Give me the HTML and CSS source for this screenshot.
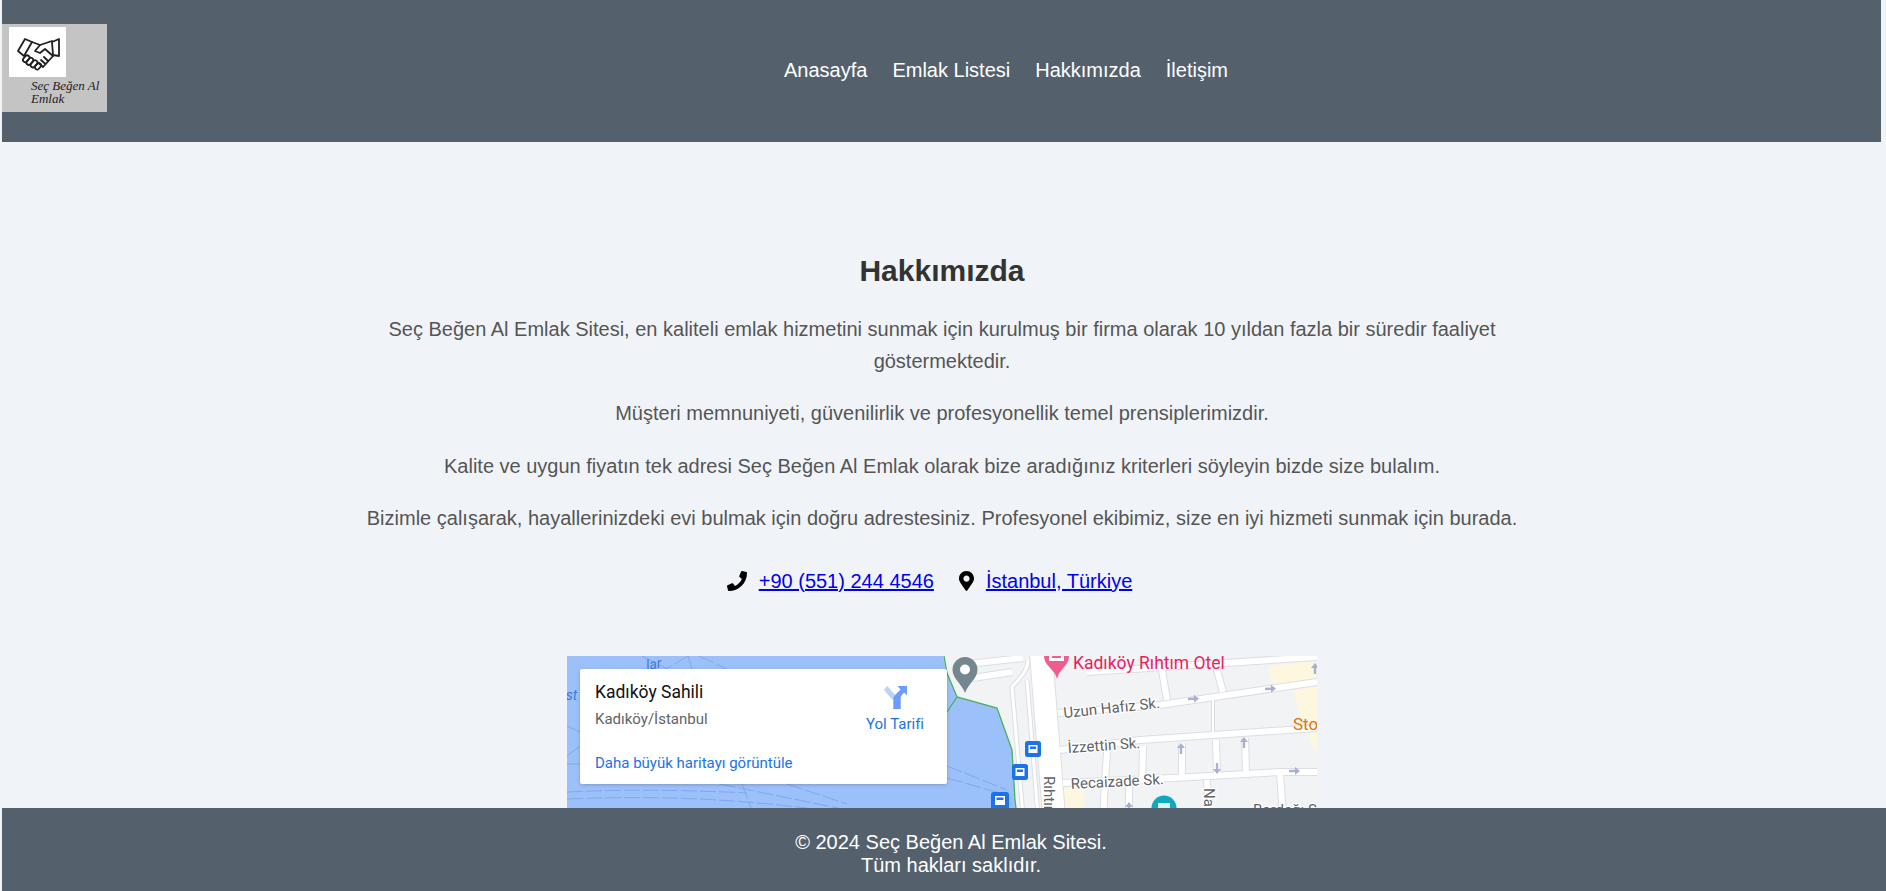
FILE: index.html
```html
<!DOCTYPE html>
<html lang="tr">
<head>
<meta charset="utf-8">
<title>Hakkımızda</title>
<link rel="stylesheet" href="styles.css">
</head>
<body>
<header class="site-header">
  <div class="logo">
    <div class="logo-mark">
      <svg viewBox="0 0 57 50" width="57" height="50" fill="none" stroke="#1f1f1f" stroke-width="1.800" stroke-linejoin="round" stroke-linecap="round">
        <path d="M16 12 L23 15 L15 29 L9 24 Z"/>
        <path d="M50 12 L50 29 L44 28 L43 15 Z"/>
        <path d="M23 15 L31 18 L43 14"/>
        <path d="M31 18 L26 24 L31 26 L36 22 L44 29"/>
        <path d="M44 29 L34 40"/>
        <path d="M39 34 L35 30 M36.500 37 L32 33 M33.500 39.500 L29.500 36"/>
        <g stroke-width="1.800">
          <rect x="13.500" y="29.500" width="7.500" height="4.600" rx="2.300" transform="rotate(-48 17.200 31.800)"/>
          <rect x="16.800" y="32" width="8" height="4.600" rx="2.300" transform="rotate(-48 20.800 34.300)"/>
          <rect x="21" y="34.500" width="8" height="4.600" rx="2.300" transform="rotate(-48 25 36.800)"/>
          <rect x="25.500" y="37" width="7" height="4.600" rx="2.300" transform="rotate(-48 29 39.300)"/>
        </g>
      </svg>
    </div>
    <div class="logo-text">Seç Beğen Al<br>Emlak</div>
  </div>
  <nav class="nav">
    <a href="#">Anasayfa</a>
    <a href="#">Emlak Listesi</a>
    <a href="#">Hakkımızda</a>
    <a href="#">İletişim</a>
  </nav>
</header>

<main class="about">
  <h1>Hakkımızda</h1>
  <p>Seç Beğen Al Emlak Sitesi, en kaliteli emlak hizmetini sunmak için kurulmuş bir firma olarak 10 yıldan fazla bir süredir faaliyet göstermektedir.</p>
  <p>Müşteri memnuniyeti, güvenilirlik ve profesyonellik temel prensiplerimizdir.</p>
  <p>Kalite ve uygun fiyatın tek adresi Seç Beğen Al Emlak olarak bize aradığınız kriterleri söyleyin bizde size bulalım.</p>
  <p>Bizimle çalışarak, hayallerinizdeki evi bulmak için doğru adrestesiniz. Profesyonel ekibimiz, size en iyi hizmeti sunmak için burada.</p>

  <div class="contact">
    <span class="contact-item">
      <svg class="ci" viewBox="0 0 512 512" width="20" height="20"><path d="M493.400 24.600l-104-24c-11.300-2.600-22.900 3.300-27.500 13.900l-48 112c-4.200 9.800-1.400 21.300 6.900 28l60.600 49.600c-36 76.700-98.900 140.500-177.200 177.200l-49.600-60.600c-6.800-8.300-18.200-11.100-28-6.900l-112 48C3.900 366.500-2 378.100.6 389.400l24 104C27.100 504.200 36.700 512 48 512c256.100 0 464-207.500 464-464 0-11.200-7.700-20.900-18.600-23.400z"/></svg>
      <a href="#">+90 (551) 244 4546</a>
    </span>
    <span class="contact-item">
      <svg class="ci" viewBox="0 0 384 512" width="15" height="20"><path d="M172.300 501.700C27 291 0 256 0 192 0 86 86 0 192 0s192 86 192 192c0 64-27 99-172.300 309.700-9.500 13.700-29.900 13.700-39.400 0zM192 272c44.200 0 80-35.800 80-80s-35.800-80-80-80-80 35.800-80 80 35.800 80 80 80z"/></svg>
      <a href="#">İstanbul, Türkiye</a>
    </span>
  </div>

  <div class="map">
    <svg class="map-svg" viewBox="0 0 750 160" width="750" height="160">
      <defs>
        <path id="streets" d="M400 8 L456 2 M406 22 L445 16 M520 16 L750 1 M491 57 L593 49 L750 26 M493 94 L573 84 L646 79 L750 72 M496 127 L606 122 L713 116 L750 116 M595 14 L600 44 M648 7 L656 36 M540 96 L536 160 M576 90 L575 127 M615 87 L615 120 M649 84 L650 118 M678 82 L679 116 M713 117 L716 160 M562 127 L562 160 M640 124 L642 160"/>
        <path id="ramps" d="M461 4 C461 12 458 17 445 31 L456 160 M460 24 L471 160"/>
        <path id="thin" d="M646 42 L646 77"/>
        <path id="arr" d="M0 -1.200 H6 V-4 L11 0 L6 4 V1.200 H0Z"/>
      </defs>
      <rect width="750" height="160" fill="#f2f3f5"/>
      <path class="tint" d="M701 11 L745 4 L750 24 L706 29Z"/>
      <path class="tint" d="M726 34 L750 31 V97 L738 76Z"/>
      <path class="tint" d="M497 132 H518 L516 160 H497Z"/>
      <path class="tint" d="M466 142 L476 140 L478 160 H466Z"/>
      <use href="#streets" class="casing"/>
      <use href="#ramps" class="casing-thin"/>
      <use href="#thin" class="casing-hair"/>
      <path class="casing-major" d="M474 -2 L487 160"/>
      <use href="#streets" class="street"/>
      <use href="#ramps" class="street-thin"/>
      <use href="#thin" class="street-hair"/>
      <path class="street-major" d="M474 -2 L487 160"/>
      <path class="water" d="M0 0 H376 L380 17 L390 41 L430 52 L445 94 L448 144 L450 160 H0Z"/>
      <path class="wave" d="M121 0 L99 13 M121 0 L125 13 M132 0 L160 13 M75 0 L100 13 M153 128 L310 160 M175 128 L187 160 M220 128 L280 148 M0 136 C60 133 120 134 180 137 M0 143 C100 139 170 144 240 152 M380 110 L440 134 M380 122 L440 139 M0 70 L13 76 M0 108 H13 M0 100 L13 90"/>
      <path class="shore" d="M377 0 L380 17 L390 41 L430 52 L445 94 L448 144 L450 160 M390 41 L380 56"/>
      <text class="lbl-water" x="80" y="14" transform="rotate(-10 80 14)">lar</text>
      <text class="lbl-water" x="-9" y="44">ost</text>
      <g class="arrow" fill="#a9b1cc">
        <use href="#arr" transform="translate(621 43) rotate(-3)"/>
        <use href="#arr" transform="translate(698 33) rotate(-3)"/>
        <use href="#arr" transform="translate(614 98) rotate(-90)"/>
        <use href="#arr" transform="translate(677 92) rotate(-90)"/>
        <use href="#arr" transform="translate(650 107) rotate(90)"/>
        <use href="#arr" transform="translate(722 115)"/>
        <use href="#arr" transform="translate(562 157) rotate(-90)"/>
        <use href="#arr" transform="translate(748 18) rotate(-90)"/>
      </g>
      <text class="lbl-pink" x="506" y="13">Kadıköy Rıhtım Otel</text>
      <text class="lbl-st" x="497" y="62" transform="rotate(-6 497 62)">Uzun Hafız Sk.</text>
      <text class="lbl-st" x="501" y="97" transform="rotate(-4 501 97)">İzzettin Sk.</text>
      <text class="lbl-st" x="504" y="133" transform="rotate(-3 504 133)">Recaizade Sk.</text>
      <text class="lbl-st" x="637" y="132" transform="rotate(90 637 132)">Nail</text>
      <text class="lbl-st" x="477" y="120" transform="rotate(90 477 120)">Rıhtım</text>
      <text class="lbl-st" x="686" y="159">Bardağı S</text>
      <text class="lbl-orange" x="726" y="74">Sto</text>
      <path d="M398 1 C391 1 385.500 7 385.500 13.500 C385.500 23 394.500 27 398 37 C401.500 27 410.500 23 410.500 13.500 C410.500 7 405 1 398 1Z" fill="#74868f"/>
      <circle cx="398" cy="13.500" r="5" fill="#fff"/>
      <path d="M477 0 H502 C502 10 492 13 490 23 C488 13 477 10 477 0Z" fill="#ee5d8b"/>
      <rect x="482" y="0" width="15" height="5" fill="#fff"/>
      <rect x="485" y="0" width="9" height="2" fill="#ee5d8b"/>
      <g class="bus">
        <rect x="458" y="85" width="16" height="16" rx="2.500"/>
        <rect x="445" y="108" width="16" height="16" rx="2.500"/>
        <rect x="424" y="136" width="18" height="18" rx="2.500"/>
        <circle cx="597" cy="152" r="12.500" class="teal"/>
      </g>
      <g class="bus-in">
        <path d="M461.500 89 H470.500 V97 H461.500Z M463 90.500 V93 H469 V90.500Z"/>
        <path d="M448.500 112 H457.500 V120 H448.500Z M450 113.500 V116 H456 V113.500Z"/>
        <path d="M428 140 H438 V149 H428Z M429.500 141.500 V144 H436.500 V141.500Z"/>
        <rect x="591" y="147" width="12" height="6" opacity=".85"/>
      </g>
    </svg>
    <div class="place-card">
      <div class="place-info">
        <div class="place-name">Kadıköy Sahili</div>
        <div class="place-addr">Kadıköy/İstanbul</div>
        <a class="place-link" href="#">Daha büyük haritayı görüntüle</a>
      </div>
      <a class="directions" href="#">
        <svg viewBox="0 0 23 23" width="23" height="23">
          <path d="M0 3.700 L3.300 0 L12 10 L8.500 14 Z" fill="#bdd1fb"/>
          <path d="M9.300 23 V13.500 C9.300 11.500 10 10 12 8 L16.500 3.500 L13.500 0 H23 V9.300 L20 6.500 L17.500 9.500 C16.800 10.500 16.700 12 16.700 14 V23Z" fill="#6c9cf8"/>
        </svg>
        <span>Yol Tarifi</span>
      </a>
    </div>
  </div>
</main>

<footer class="site-footer">
  <div>© 2024 Seç Beğen Al Emlak Sitesi.</div>
  <div>Tüm hakları saklıdır.</div>
</footer>
</body>
</html>
```

FILE: styles.css
```css
* { box-sizing: border-box; }
html, body { height: 100%; }
body {
  margin: 0;
  padding-left: 2px;
  width: 1886px;
  height: 891px;
  overflow: hidden;
  background: #f0f4f8;
  font-family: "Liberation Sans", Arial, sans-serif;
  color: #000;
}
.site-header {
  height: 142px;
  width: 1879px;
  background: #54616d;
  display: flex;
  align-items: center;
}
.logo {
  width: 105px;
  height: 88px;
  background: #c4c4c4;
  flex: none;
  margin-top: -6px;
  padding: 3px 0 0 7px;
}
.logo-mark { width: 57px; height: 50px; background: #fff; }
.logo-mark svg { display: block; }
.logo-text {
  margin: 2px 0 0 22px;
  font: italic 13px/13px "Liberation Serif", serif;
  color: #222;
  white-space: nowrap;
}
.nav {
  display: flex;
  gap: 25px;
  margin-left: 677px;
  margin-top: -2px;
}
.nav a { color: #fff; text-decoration: none; font-size: 20px; }
.about {
  width: 1200px;
  margin-left: 340px;
  padding-top: 112px;
  text-align: center;
}
h1 {
  margin: 0 0 25px;
  font-size: 30px;
  line-height: 34px;
  color: #333;
}
p {
  margin: 0 0 20.400px;
  font-size: 20px;
  line-height: 32px;
  color: #555;
}
.contact {
  display: flex;
  justify-content: center;
  gap: 25px;
  margin-top: 35.400px;
  padding-right: 25px;
  font-size: 20px;
}
.contact-item { display: inline-flex; align-items: center; gap: 12px; }
.contact a { color: #00e; }
.ci { fill: #000; flex: none; }
.map {
  position: relative;
  width: 750px;
  height: 160px;
  margin: 63px 0 0 225px;
  overflow: hidden;
  text-align: left;
}
.map-svg { display: block; font-family: Roboto, sans-serif; }
.water { fill: #9cc0f9; }
.wave { fill: none; stroke: #7fa8ee; stroke-width: 1; stroke-dasharray: 16 3; }
.shore { fill: none; stroke: #4caf5f; stroke-width: 1.300; }
.tint { fill: #fef7e0; }
.casing { fill: none; stroke: #dcdee3; stroke-width: 8; }
.street { fill: none; stroke: #fff; stroke-width: 6; }
.casing-thin { fill: none; stroke: #dcdee3; stroke-width: 5; }
.street-thin { fill: none; stroke: #fff; stroke-width: 3; }
.casing-hair { fill: none; stroke: #dcdee3; stroke-width: 4; }
.street-hair { fill: none; stroke: #fff; stroke-width: 2; }
.casing-major { fill: none; stroke: #dcdee3; stroke-width: 24; }
.street-major { fill: none; stroke: #fff; stroke-width: 22; }
.lbl-pink { fill: #e91e63; font-size: 17.500px; }
.lbl-st { fill: #5f6368; stroke: #fff; stroke-width: 2.500; paint-order: stroke; font-size: 15px; }
.lbl-orange { fill: #e37400; font-size: 17px; }
.lbl-water { fill: #3a78dc; font-size: 14px; font-style: italic; }
.bus rect { fill: #1a73e8; }
.bus .teal { fill: #12a8bc; }
.bus-in { fill: #fff; fill-rule: evenodd; }
.place-card {
  position: absolute;
  left: 13px;
  top: 13px;
  width: 367px;
  height: 115px;
  background: #fff;
  border-radius: 2px;
  box-shadow: 0 1px 4px -1px rgba(0, 0, 0, .3);
  padding: 11px 15px;
  display: flex;
  justify-content: space-between;
  font-family: Roboto, sans-serif;
}
.place-name { font-size: 17.500px; font-weight: 400; line-height: 24px; color: #111; }
.place-addr { font-size: 15px; line-height: 20px; margin-top: 5px; color: #5f6368; }
.place-link { display: block; margin-top: 25px; font-size: 15px; line-height: 18px; color: #1a73e8; text-decoration: none; }
.directions {
  display: flex;
  flex-direction: column;
  align-items: center;
  width: 58px;
  margin: 6px 8px 0 0;
  gap: 6px;
  color: #1a73e8;
  font-size: 15px;
  text-decoration: none;
  white-space: nowrap;
}
.directions svg { display: block; }
.site-footer {
  position: fixed;
  left: 2px;
  right: 0;
  bottom: 0;
  height: 83px;
  background: #54616d;
  color: #fff;
  font-size: 20px;
  line-height: 23px;
  text-align: center;
  padding-top: 23px;
  padding-left: 14px;
}
```
